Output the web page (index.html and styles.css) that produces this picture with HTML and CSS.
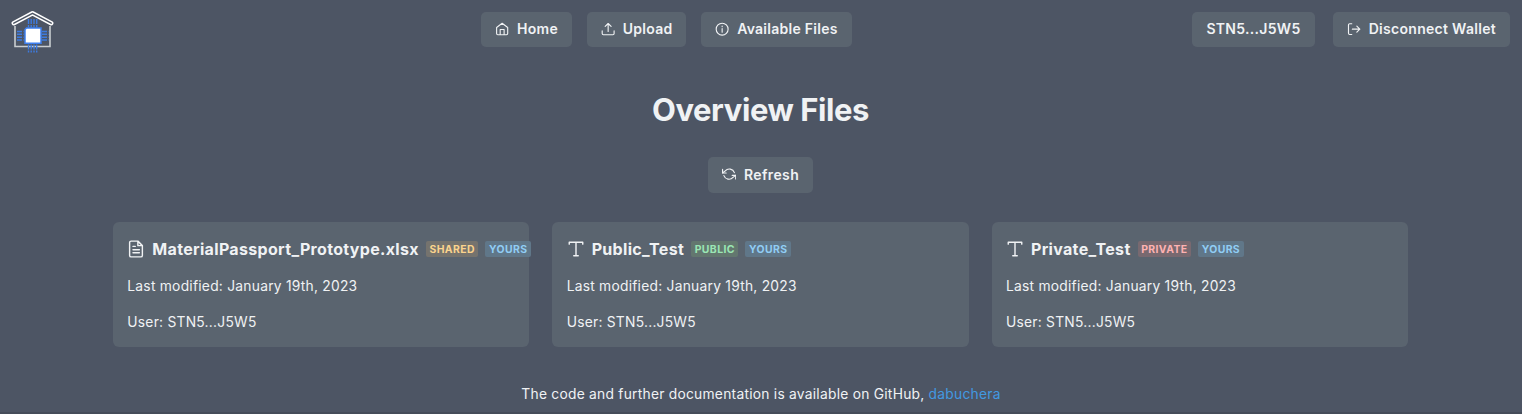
FILE: index.html
```html
<!DOCTYPE html>
<html lang="en">
<head>
<meta charset="utf-8">
<title>Overview Files</title>
<link rel="stylesheet" href="styles.css">
</head>
<body>
<svg class="sprite" aria-hidden="true">
  <symbol id="home" viewBox="0 0 24 24"><path d="M2.700 9.200 12 2.200l9.300 7v10.300a2 2 0 0 1-2 2H4.700a2 2 0 0 1-2-2z"/><path d="M8.700 21v-8.500h6.600V21"/></symbol>
  <symbol id="upload" viewBox="0 0 24 24"><path d="M12 16V2.500M7 7.500l5-5 5 5M2 15v4.500a2 2 0 0 0 2 2h16a2 2 0 0 0 2-2V15"/></symbol>
  <symbol id="info" viewBox="0 0 24 24"><circle cx="12" cy="12" r="10"/><path d="M12 11v6M12 7v.8"/></symbol>
  <symbol id="logout" viewBox="0 0 24 24"><path d="M8 3H4.500a2 2 0 0 0-2 2v14a2 2 0 0 0 2 2H8M9 12H21.500M16.500 7l5 5-5 5"/></symbol>
  <symbol id="refresh" viewBox="0 0 24 24"><path d="M1 4v6h6M23 20v-6h-6"/><path d="M5.500 6.500A9 9 0 0 1 20.800 9.500M18.500 17.500A9 9 0 0 1 3.200 14.500M1 10l4.500-3.500M23 14l-4.500 3.500"/></symbol>
  <symbol id="file" viewBox="0 0 24 24"><path d="M14.500 1.500H5.500a2 2 0 0 0-2 2v17a2 2 0 0 0 2 2h13a2 2 0 0 0 2-2V7.500zM14.500 1.500v6h6M8 8.500h3M8 13h8.500M8 17h8.500"/></symbol>
  <symbol id="text" viewBox="0 0 24 24"><path d="M3 5.500V3h18v2.500M12 3v18M9 21h6"/></symbol>
</svg>
<header class="topbar">
  <svg class="logo" viewBox="0 0 44 44">
    <path class="wall" d="M4 16V36.500H39V16"/>
    <path class="roof-edge" d="M2.800 13.200 21.500 3.300 40.200 13.200"/>
    <path class="roof-gap" d="M2.800 13.200 21.500 3.300 40.200 13.200"/>
    <path class="pins" d="M17.500 9v8.500M20.200 9v8.500M23 9v8.500M25.700 9v8.500M17.500 34.500v8M20.200 34.500v8M23 34.500v8M25.700 34.500v8"/>
    <path class="pins" d="M6 21.500h6.500M6 24.300h6.500M6 27.200h6.500M6 30h6.500M31 21.500h6.500M31 24.300h6.500M31 27.200h6.500M31 30h6.500"/>
    <path class="chip" d="M15.500 18H30v15.200H14V19.500z"/>
  </svg>
  <nav class="menu">
    <a class="btn"><svg class="icon"><use href="#home"/></svg>Home</a>
    <a class="btn"><svg class="icon"><use href="#upload"/></svg>Upload</a>
    <a class="btn"><svg class="icon"><use href="#info"/></svg>Available Files</a>
  </nav>
  <div class="wallet">
    <span class="btn">STN5...J5W5</span>
    <a class="btn"><svg class="icon"><use href="#logout"/></svg>Disconnect Wallet</a>
  </div>
</header>
<main>
  <h1>Overview Files</h1>
  <button class="btn refresh"><svg class="icon"><use href="#refresh"/></svg>Refresh</button>
  <section class="cards">
    <article class="card">
      <h2><svg class="icon kind"><use href="#file"/></svg><span class="name">MaterialPassport_Prototype.xlsx</span><span class="badge shared">SHARED</span><span class="badge yours">YOURS</span></h2>
      <p>Last modified: January 19th, 2023</p>
      <p>User: STN5...J5W5</p>
    </article>
    <article class="card">
      <h2><svg class="icon kind"><use href="#text"/></svg><span class="name">Public_Test</span><span class="badge public">PUBLIC</span><span class="badge yours">YOURS</span></h2>
      <p>Last modified: January 19th, 2023</p>
      <p>User: STN5...J5W5</p>
    </article>
    <article class="card">
      <h2><svg class="icon kind"><use href="#text"/></svg><span class="name">Private_Test</span><span class="badge private">PRIVATE</span><span class="badge yours">YOURS</span></h2>
      <p>Last modified: January 19th, 2023</p>
      <p>User: STN5...J5W5</p>
    </article>
  </section>
</main>
<footer>The code and further documentation is available on GitHub, <a>dabuchera</a></footer>
</body>
</html>
```
FILE: styles.css
```css
* { box-sizing: border-box; }
body {
  margin: 0;
  height: 414px;
  overflow: hidden;
  background: #4d5564;
  border-bottom: 2px solid #454c59;
  color: #f0f2f4;
  font: 400 13.8px/21px Inter, sans-serif;
  letter-spacing: 0.25px;
}
.sprite { display: none; }
.topbar {
  display: flex;
  height: 59px;
  padding: 12px 12px 0 11px;
}
.logo { flex: none; width: 44px; height: 44px; margin-top: -2px; fill: none; }
.wall { stroke: #c9cdd0; stroke-width: 1.6; }
.roof-edge { stroke: #fff; stroke-width: 4.5; stroke-linecap: round; stroke-linejoin: round; }
.roof-gap { stroke: #4d5564; stroke-width: 1.5; stroke-linecap: round; stroke-linejoin: round; }
.pins { stroke: #3d7be0; stroke-width: 1.4; stroke-dasharray: 5 1; }
.chip { fill: #fff; stroke: #3d7ff0; stroke-width: 1.5; }
.menu { display: flex; gap: 14.6px; margin-left: 426px; }
.wallet { display: flex; gap: 18px; margin-left: auto; }
.btn {
  display: flex;
  align-items: center;
  gap: 7.5px;
  height: 35px;
  padding: 0 14px 2px 14.3px;
  border: 0;
  border-radius: 5px;
  background: #5a646f;
  color: #f0f2f4;
  font: 600 14px/21px Inter, sans-serif;
  letter-spacing: 0.27px;
  white-space: nowrap;
}
.wallet .btn { letter-spacing: 0.3px; }
.icon {
  flex: none;
  width: 14.3px;
  height: 14.3px;
  fill: none;
  stroke: currentColor;
  stroke-width: 1.9;
  stroke-linecap: round;
  stroke-linejoin: round;
}
.menu .icon, .wallet .icon { margin-top: 1px; }
main { padding: 0 114px 0 113px; }
h1 {
  margin: 30px 0 0;
  font-size: 31px;
  line-height: 42px;
  font-weight: 700;
  letter-spacing: -0.43px;
  text-align: center;
}
.refresh { margin: 26px auto 0; height: 36px; padding-bottom: 1px; letter-spacing: 0.4px; }
.cards {
  display: grid;
  grid-template-columns: repeat(3, 1fr);
  gap: 23px;
  margin-top: 29px;
}
.card {
  min-width: 0;
  height: 125px;
  padding: 16px 14.3px;
  border-radius: 6px;
  background: #5a646f;
}
h2 {
  display: flex;
  align-items: center;
  margin: 0 0 16px;
  font-size: 16px;
  line-height: 22px;
  font-weight: 700;
  letter-spacing: 0.32px;
  white-space: nowrap;
}
.kind { width: 18px; height: 18px; margin-right: 7px; }
.card p { margin: 0 0 15px; }
.badge {
  flex: none;
  height: 16px;
  margin-left: 7px;
  padding: 0 3.6px;
  border-radius: 2px;
  font-size: 10.4px;
  line-height: 17px;
  letter-spacing: 0.4px;
}
.shared { background: #75736e; color: #fbd38d; }
.yours { background: #607789; color: #90cdf4; }
.public { background: #63776f; color: #9ae6b4; }
.private { background: #786970; color: #feb2b2; }
footer { margin-top: 37px; text-align: center; }
footer a { color: #4299e1; }
```
